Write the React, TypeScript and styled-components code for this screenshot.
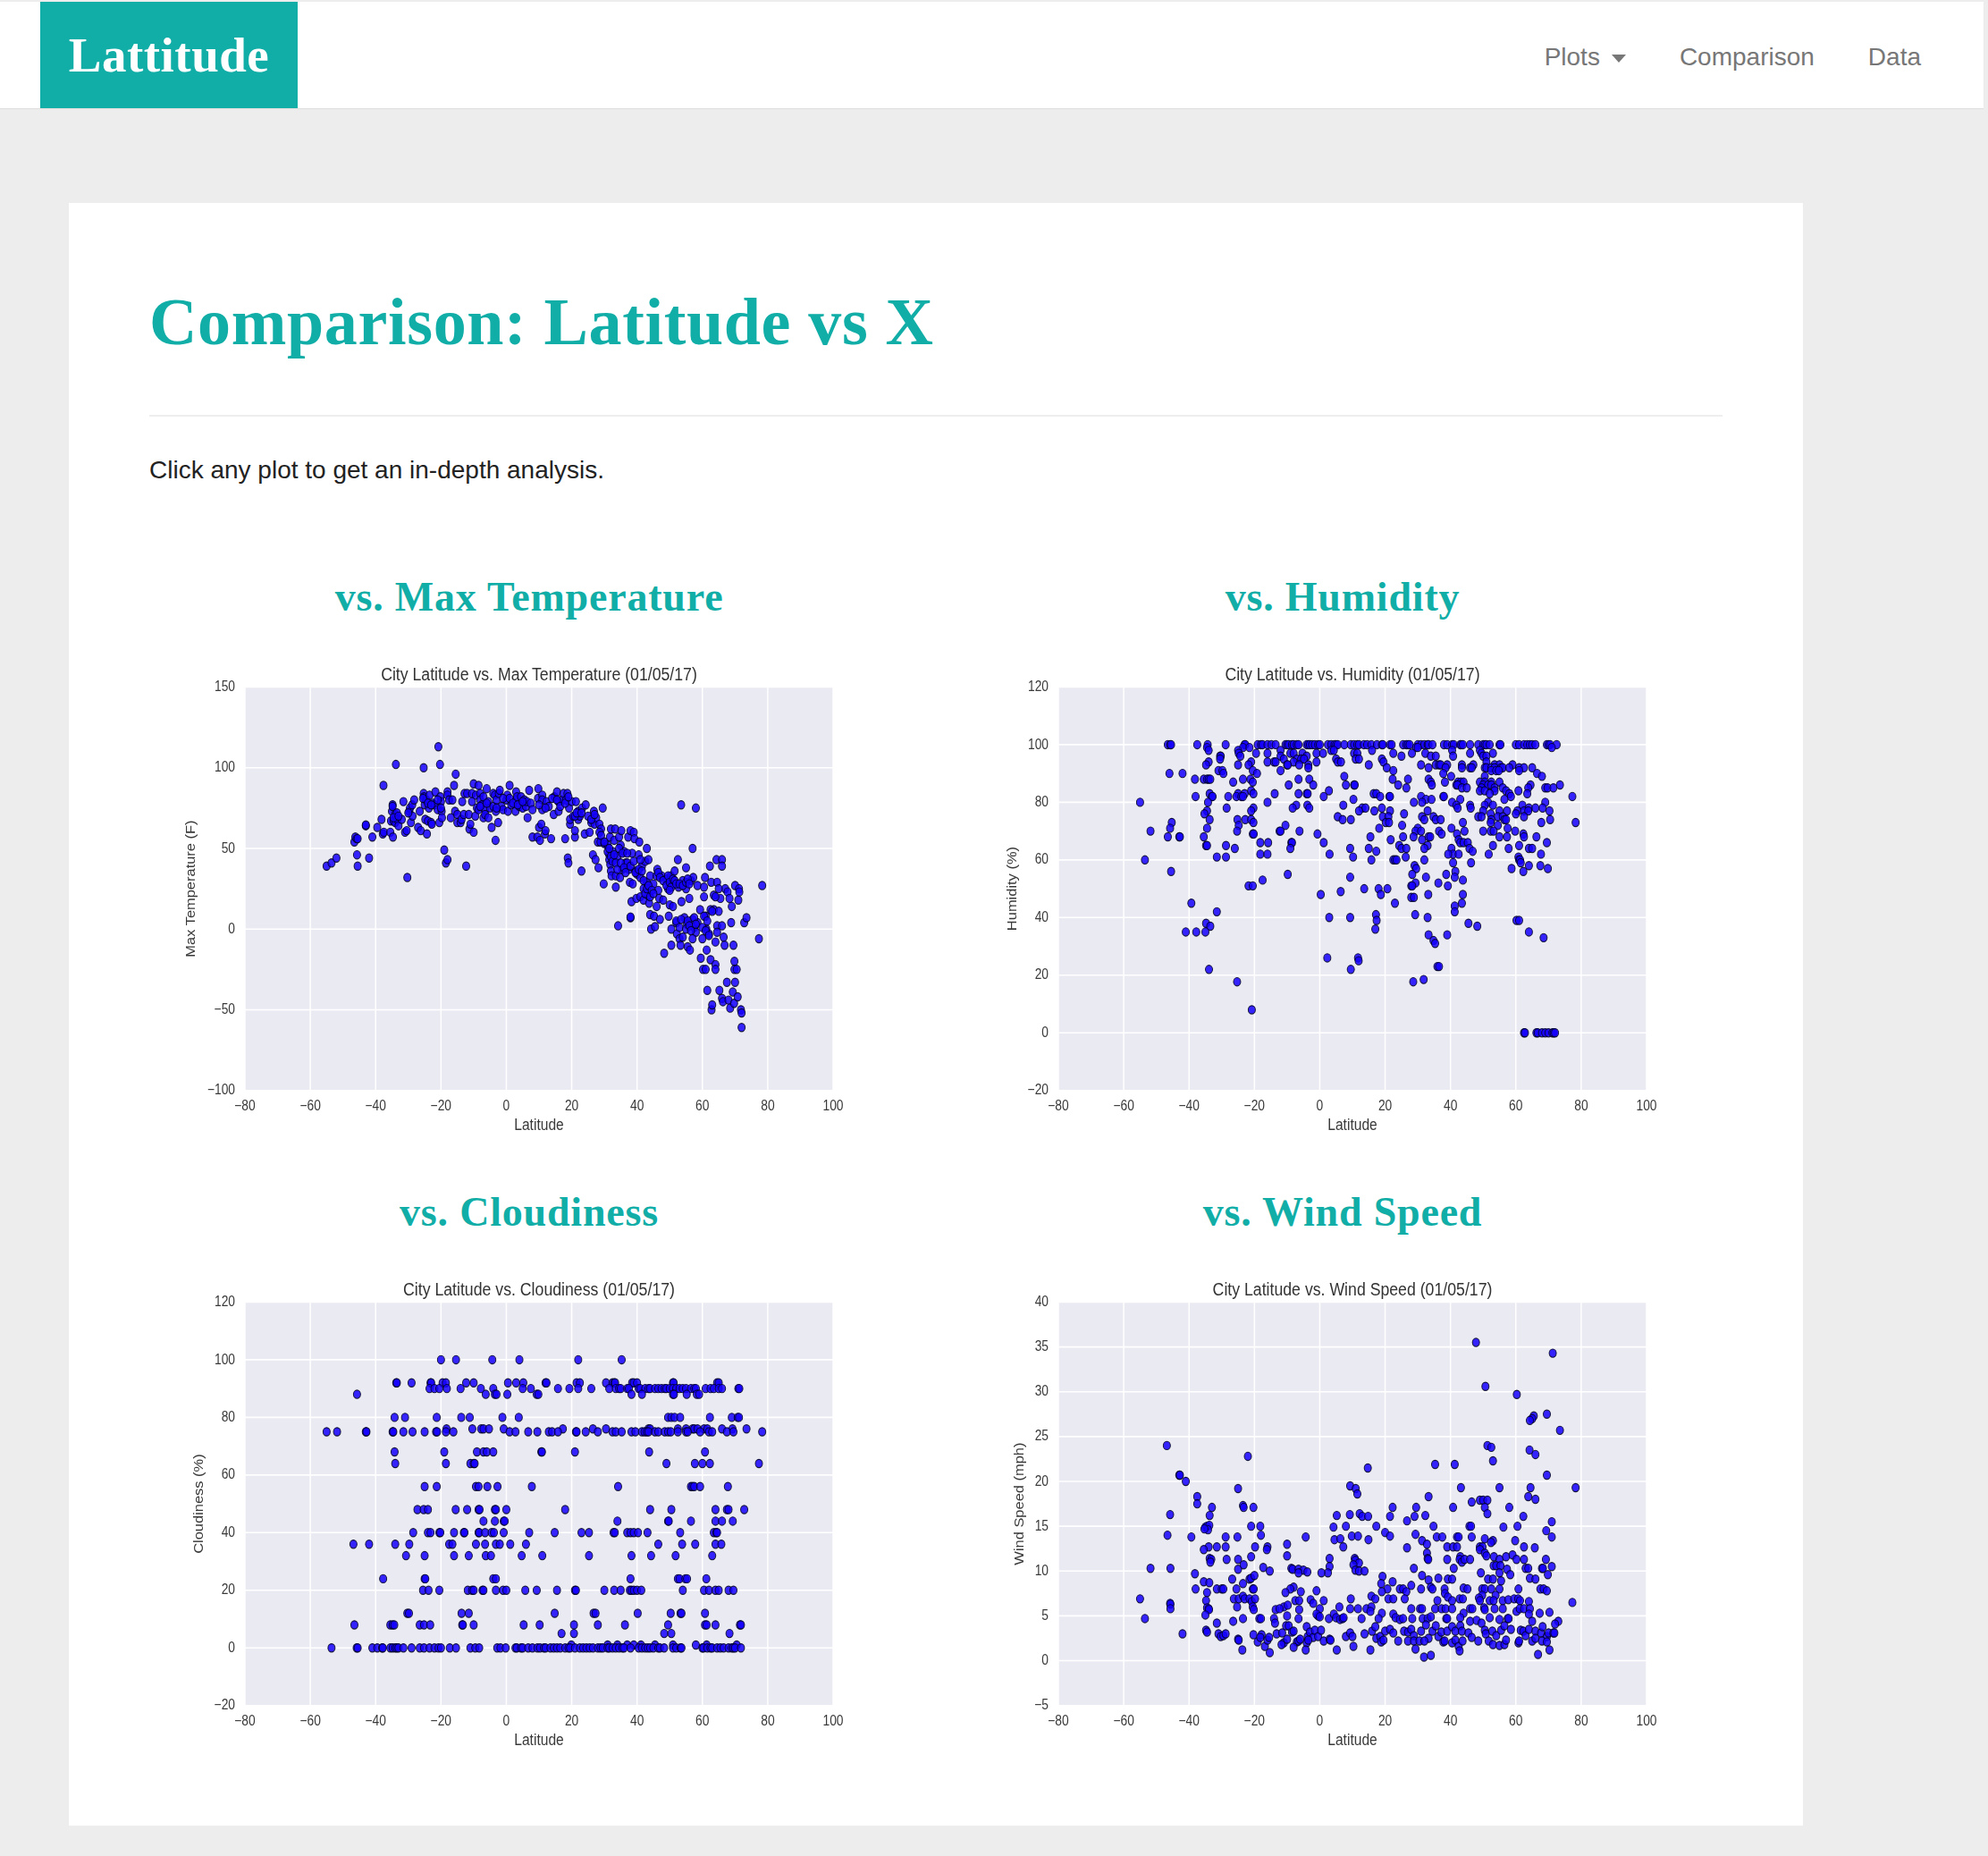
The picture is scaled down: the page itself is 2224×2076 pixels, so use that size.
import styled, { createGlobalStyle } from 'styled-components';

const GlobalStyle = createGlobalStyle`
    html, body {
        margin: 0;
        padding: 0;
        background: #ededed;
        font-family: "Liberation Sans", Arial, sans-serif;
    }
`;

type Row = [number, number[]];

// lat,value pairs read off the plots
const tempPoints = [
    -55,39,-53.5,41,-52,44,-46.5,54,-46.2,57,-45.8,56,-45.5,56,-45.7,46,-45.5,39,-42,44,-41,57,-43,64,-43,64.5,-39.5,63,-38.2,68,-37.8,59,-37.5,60,-37.6,89,
    -35.5,60,-35.3,67,-35,73,-34.8,77,-34.8,76,-34.7,57,-34.5,67,-34,71,-34,66,-33.8,102,-33.5,72,-33.3,68,-33,64,-32,68,-31.5,79,-31,60,-30.5,61,-30.3,32,
    -29.7,73,-29.5,75,-29.2,66,-28.8,77,-28.7,70,-28.2,80,-27,63,-26.5,73,-26.2,61,-25.3,100,-25.3,84,-25.2,82,-25,77,-24.8,68,-24.5,80,-24.3,59,-24,67,-23.7,75,-23.5,83,
    -23,66,-22.8,65,-22.5,78,-22,77,-21.7,85,-21,74,-20.8,113,-20.5,66,-20.3,102,-20.2,82,-20,79,-19.8,73,-19.7,69,-19,49,-18.5,41,-18,43,-18,85,-18,83,-17.5,80,-17,69,
    -16.5,80,-16,89,-15.7,73,-15.5,96,-15,71,-15,66,-14,66,-13.7,68,-13.5,79,-13,71,-12.8,84,-12.3,39,-12,84,-11.5,71,-11.3,62,-11,65,-10.5,84,-10.5,79,-10,60,-10,90,
    -9.5,70,-9.3,83,-9,75,-8.5,74,-8.5,89,-8,84,-8,80,-7.5,77,-7,69,-7,82,-6.5,74,-6.5,71,-6,87,-5.5,79,-5.5,69,-5,75,-4.5,63,-4,84,-4,76,-3.5,83,-3.3,55,-3.2,73,-3,80,
    -2.5,66,-2.3,84,-2,86,-1.5,76,-1,74,0,80,0.3,83,0.5,73,1,89,1.5,77,2.8,73,3,85,3,80,3.3,82,4,76,4.5,82,5,75,5.5,80,6,76,6.3,79,6.5,69,7,86,7.5,78,8,74,8,57,9.5,57,
    9.7,81,9.8,87,10,63,10.3,55,10.7,65,11,83,11,80,11,74,11.8,59,12,61,12.3,79,13,76,13.7,56,14.5,71,14.7,82,15.5,85,16,73,16,79,17,80,17.5,84,18,56,18.3,80,18.7,84,
    18.8,44,19,41,19.2,75,19.5,65,19.5,68,20,79,20.5,70,21,57,21,61,21.3,79,22,68,22,73,22.5,70,23,36,23.2,75,24,59,24.3,77,25,70,25.5,60,26,66,26.5,46,26.8,73,27,65,
    27.3,43,27.5,69,28,54,28.2,38,28.5,65,28.8,54,29,62,29.5,75,29.8,28,30,53,31,52,31.5,46,31.7,57,32,62,31.5,43,31.8,40,32,36,32.2,33,32.5,48,33,55,33.3,62,33.5,26,
    33.5,33,34,45,34.2,2,34.5,57,34.8,32,35,52,35.2,61,35.5,37,36,48,36.5,41,37,41,37.3,57,37.5,37,37.8,29,38,61,38,7,38,7.5,38.3,17,38.5,47,38.7,28,39,60,39.2,56,39.5,36,
    39.8,19,40,34,40.5,46,40.7,54,41,32,41,20,41.5,39,42,18,42,25,42.5,42,43,50,43,29,43.3,21,43.5,43,43.7,16,44,9,44,33,44.3,0,45,28,45.2,8,45.5,1.5,46,14,46.2,37,46.5,24,
    46.8,19,47,6,47.5,33,48,18,48.3,-15,49,31,49.5,25,49.7,8,50,15,50.3,33,50.5,-10,50.5,0,51,14,51,28,51.5,36,52,4,52.2,-3,52.5,43,52.7,26,53,-6,53.3,-10,53.5,77,53.6,17,
    54,30,54.5,7,55,38,55,25,55.3,3,55.5,-11,56,19,56.2,-13,56.5,30,57,6,57,50,57.2,32,57.5,1,58,75,58,-2,58.5,27,58.5,4,59.3,12,59.5,-18,60,-6,60.2,-25,60.5,20,60.5,26,
    60.8,32,61,-25,61,8,61.2,0,61.3,-13,61.5,-38,62,-3,62.3,39,62.5,-19,62.7,29,62.8,-50,63,-47,63.5,12,64,-8,64,-22,64,-25,64.3,43,64.5,29,64.5,2,65,11,65.2,-38,65.5,19,
    66,43,66,39,66,-43,66.3,-45,66.5,-5,66.8,-10,67,25,67.5,-33,67.7,23,68,-44,68.3,19,68.5,-49,68.8,4,69,14,69.3,-39,69.5,-10,69.7,-46,69.8,-20,69.8,-25,70,-33,70,27,
    70.5,-25,70.8,-42,71,18,71.2,25,71.3,23,71.8,-50,72,-52,72,-61,72.8,4,73.5,7,77.3,-6,78.3,27,
    // denser part of the curve
    -34.5,69,-33,70,-30,72,-25.5,81,-24,78,-23,77,-21,80,-20,75,-8,76,-6,78,-3,75,-1,81,1,81,2,78,3.5,77,5,79,10,77,12,75,14,81,15.5,80,16.5,76,18,78,19,82,21,70,21.5,72,
    23,72,26,68,27,71,28.5,60,29,58,30,54,31,48,31.5,50,32,45,32.5,42,33,46,33.5,41,34,37,34.5,50,35,41,35.5,47,36,38,36.5,35,37,47,38,39,39,42,39.5,35,40.5,37,41,43,
    41.5,36,42,30,42.5,22,43,25,43.5,27,44,20,44.5,24,45,22,46,33,46.5,35,47,32,48,30,49,27,49.5,33,50,29,50.5,26,51,31,51.5,30,52,28,53,28,54,27,55,29,55.5,31,56,28,
    50,24,52,5,53,1,53.5,6,54,-5,55,0,55.5,5,56,2,56.5,-1,57,-6,57.5,7,58,3,60,1,60.5,8,61,-1,61.5,5,62,-4,62.5,12,63,11,63.5,21,64,20,64.5,-2,65,25,66,2,
];

const humidityRows: Row[] = [
    [100, [-46.5,-45.8,-45.5,-37.5,-34.3,-28.8,-23,-22.8,-19,-18,-17.5,-16,-14.8,-13.5,-10.5,-10,-9.5,-8.5,-8,-7,-6.5,-4,-3.5,-3,-2.3,-1.5,-0.5,0,2.5,3.5,4.5,5,5.5,7.5,9.5,10.5,11.5,12,13.5,14.5,15.8,17.5,19,19.3,21.5,22,25.5,26.5,27,27.5,30,31,32,33,33.3,34.5,38,39,40.5,41,43,43.3,43.8,46,48.5,50,50.5,51,52,55,55.3,60,61,62.5,63.5,64.3,65,66,69.5,70,70.5,72.5]],
    [99, [-34.5,-23.5,-21.5,29.5,30,71]],
    [98, [-34,-25,-12,3.5,4.3,16,40.5,49]],
    [97, [-24.8,-19.5,-16,-9,-8,-5.3,-1,1,10.5,11.5,22.5,28.2,32.3,46,49.5,53]],
    [96, [-30.5,-30.3,-24.3,-12,-4,25,34,35.5,40.8,50,51]],
    [95, [-30.5,-11,-7,-5.7,-4.8,5,11,12,19]],
    [94, [-34,-21,-16,-14,-13.5,-8,-1,5.5,6.5,19.5,51]],
    [93, [-34.8,-25,-21.8,-10,-9.8,-6.3,-3.5,15,31,35.5,36.5,37,39,43.5,47,53.5,55,59]],
    [92, [-3.5,20.5,33.3,38.5,43.5,46,46.5,50.5,51,52.5,53.5,55.5,56,58,61,62.5,65]],
    [91, [-31,-29.8,-20.5,-12,22.5,52.5,54,54.8,61]],
    [90, [-46,-42,-29.5,-19.2,37.8,66.5]],
    [89, [7.5,40.2,50.5,68]],
    [88, [-38.2,-35.5,-34.5,-34,-33.5,-23.5,-21.2,-6.5,-3.2,22.3,27,33.3]],
    [87, [-26.5,-20.5,34,38.3,42.3,43.2,44,49,50.5,52.5,55]],
    [86, [-9.5,-2,8,10.5,10.7,24,34.3,41.8,42.2,50,51.5,52.5,64.5,73.5]],
    [85, [26.5,43.5,45,49.5,53.5,56,63.8,69,69.7,71.5]],
    [84, [-21,2.8,49,50.5,53.5,57,60.8]],
    [83, [-33.7,-25,-23,-20.3,-13.8,-6.5,-4,-3.7,16.5,17.3,52,58,63.5]],
    [82, [-38,-33,-32.8,-28,-25.5,-24,-23.5,1.2,18.5,21.3,21.5,31,37.8,38,58.5,77.3]],
    [81, [10.3,32.5,34.2,43,56.5]],
    [80, [-55,-34.2,-16,28.8,31.3,40.5,51.5,69]],
    [79, [-7.2,-3.8,7.2,41.8,46,50.5,53,62]],
    [78, [-28.5,-20.3,-8.3,-3.2,13,14,19,42.2,46.2,64,66,68.2]],
    [77, [-34.5,-21,12,16.7,21.5,33,50,55,57.3,60.5,62.5,63.8,70.3]],
    [76, [-35.3,25.8,52.3,60]],
    [75, [5.5,19.3,21,31.3,34.8,48.5,49.5,54.5,56,62.5]],
    [74, [-33.7,-25.2,-22.8,-21,7,9.5,32,35.5,37,52.5,56.5,57,70.5]],
    [73, [-45.3,-20.3,20.2,21.2,43.8,52.3,67.8,78.3]],
    [72, [-24.8,-10.5,25.2,54.5]],
    [71, [-45.8,-34.5,18.2,30,40.3,57.5]],
    [70, [-51.8,-25.3,-12.3,-12,-6.2,29.3,31,36.5,44.3,50,52.3,53.2,59.8]],
    [69, [-20.5,-20.2,-0.7,37.3,42,62.3]],
    [68, [-46.5,-43,-42.8,-35.5,15.5,25.5,28.7,33.3,33.8,55,57.3,62.5,66.3]],
    [67, [21.7,31.3,42.5]],
    [66, [-18.2,-15.8,-8.7,-8.5,1.2,43,44,45.3,69.5]],
    [65, [-34.8,-34.5,-28.7,24.3,33,53,61]],
    [64, [-26,-9,9.3,15,25,26.5,32,40.3,45.8,57.8,64,65]],
    [63, [17.3,46.8]],
    [62, [-18.2,-16,3,40.8,39.3,42.5,51.7,67.7]],
    [61, [-31.5,-28.7,10.2,26.3,60.8]],
    [60, [-53.5,15.8,22.5,23,23.5,32,61,61.3]],
    [59, [40.8,46.3,61.5]],
    [58, [29,64,67.5]],
    [57, [29.5,58.7,69.8]],
    [56, [-45.5,41.5,62.3]],
    [55, [-9.8,28.3,38.7]],
    [54, [9.3,32.5,41.3]],
    [53, [-17.5,43.8]],
    [52, [29.3,36.3]],
    [51, [-21.8,-20.5,28,28.3,39.2]],
    [50, [13.6,18,20.7]],
    [49, [6.4]],
    [48, [0.3,18.7,33.2,43.8]],
    [47, [28,28.8]],
    [45, [-39.3,23,43.5]],
    [44, [41.3]],
    [42, [-31.5,41.3]],
    [41, [17.2,29.2]],
    [40, [2.9,9.3,33]],
    [39, [17.4,60.2,61]],
    [38, [-34.8,45.5]],
    [37, [-33.5,48.2]],
    [36, [17]],
    [35, [-41,-37.8,-35,64]],
    [34, [33.3,39]],
    [33, [68.5]],
    [32, [34.8]],
    [31, [35.3]],
    [26, [2.3,11.7]],
    [25, [11.9]],
    [23, [36,36.5]],
    [22, [-33.9,9.5]],
    [18.5, [31.8]],
    [17.7, [-25.3,28.6]],
    [8, [-20.8]],
    [0, [62.5,62.8,66.3,66.7,68,69,70,71.2,71.6,72]],
];

const cloudRows: Row[] = [
    [100, [-20,-15.4,-4.3,4,22,35.3]],
    [92, [-33.7,-33.5,-29,-23.2,-23,-19.5,-18.5,-12.3,-10,0.5,3,5.2,12,12.3,21.5,22.5,30.5,32.5,33,33.3,38.5,39,40,51,51.2,64.5,65]],
    [90, [-23.5,-22,-20.5,-18.2,-14,-7.8,-4,5,7.5,15.8,19.3,22,26,31.5,33.5,34.5,35,37,37.5,40.5,41,42.5,43.5,44,45.5,46.5,47.5,48.5,49,50,51,52,53,54,55,56.5,57.5,58,61,62.5,63.5,65,66,71,71.3]],
    [88, [-45.7,-6.3,-3.5,-3,0.3,9.3,9.8,38.3,41.5,51,51.3,55.2,58.3,59]],
    [80, [-34.2,-31,-21.3,-13.8,-11.2,-1.2,3.8,49.5,50.5,51.5,53.2,62.3,69,70.8,71.2]],
    [76, [-18.3,-10.4,-7.7,-7,-5.3,-0.8,17.3,26.5,30.5,43.5,44,52.5,55,57,57.5,58.5,60.5,61.5,66,69.2,73.5]],
    [75, [-55,-51.8,-43,-42.8,-34.8,-34.6,-31.5,-28.7,-25,-21.5,-21.2,-18.5,-16.2,1,2.8,6.7,9.5,13,14,15.8,21.3,21.5,24.3,28,32.5,33.5,35.3,38.3,39.5,41.5,42.3,43,43.5,45.5,46.5,48.5,49.5,50.3,52.5,55,55.5,59.3,62,63,67.5,69.5,78.3]],
    [68, [-34.2,-19,-9,-7,-6,-4,10.7,10.9,21,43.7,60.8]],
    [64, [-34,-18.5,-11,-10,-9.7,49,57.7,60,62.3,77.3]],
    [56, [-25,-21.3,-9.3,-8.5,-5.8,-2.7,7.8,34.2,56.5,57,57.5,59.3,67.8]],
    [48, [-27.2,-25.3,-24,-15.5,-12,-8.5,-8.2,-3.5,-3.2,0,18,44,50.5,64,67.5,68,72.8]],
    [44, [-7,-3.5,-0.8,-0.5,34,49.5,49.7,56.5,64,66,69.3]],
    [40, [-28.5,-24,-23.2,-20.5,-20.2,-16,-13,-12.8,-8.5,-8.3,-6.5,-4.5,-3.8,-0.8,7,14.8,23,25.3,32.8,33.2,37,38,39,40.3,43.2,53.2,63.5,64.2,64.5]],
    [36, [-46.8,-42,-34,-29.7,-17.5,-16.5,-9.3,-6.5,-3.2,-2,1.2,6,46.5,53.8,57.8,64,65.8]],
    [32, [-30.7,-25,-16,-11.5,-6.3,-4.7,4.7,11,25.3,38.3,44.3,51.8,63]],
    [24, [-37.7,-25,-24.8,-4,-3.2,38,52.5,53,54.8,55.3,61.2]],
    [20, [-25.5,-23.8,-20.5,-11.8,-10.5,-10,-7.3,-7,-3.2,-1,0,5.8,9.3,15.5,21,21.3,30,33,35,37.8,38.3,39,40,41.3,54,60.5,62,64,65,68,69.5]],
    [12, [-30.3,-29.8,-13.7,-11.5,14.8,26.7,27.3,40.2,50.3,53.3,53.6,60.8]],
    [8, [-46.5,-35.5,-34.8,-34.3,-26.5,-25.2,-23.3,-13.5,-13.3,-10,5.3,10.2,20.7,28,36.3,49.5,60.8,61.3,64,71.5,71.8]],
    [5, [16.9,20.7,48.3,50.5,68.3]],
    [1, [19.9,31,34,37,39,41.2,45.5,51,58,61.3,70.5]],
    [0, [-53.5,-45.8,-45.5,-41,-39.5,-38,-37.8,-35.5,-34.8,-34,-33.5,-33,-31.5,-29,-26.5,-25.2,-23.5,-22,-20.8,-20,-17.3,-15.4,-11,-9.5,-8.3,-2.8,-1.8,-0.2,2.8,3.2,4.5,5,6.7,8,9.5,10.3,11.5,12,13.5,14.5,15.5,16.5,18,19,19.5,21,22.5,23.5,24.5,25.5,26.5,28,28.8,29.5,31,31.5,32.5,33.5,34.5,35.5,36,38,40.5,41.5,42.5,43.3,44,45,46.5,47,48.3,51,52,53.3,53.6,60,60.3,61.5,62.5,63,64.5,65.5,66.5,68,69,69.5,70,71.8]],
];

const windPoints = [
    47.8,35.5,71.3,34.3,50.7,30.6,60.3,29.7,69.5,27.5,65.5,27.3,65,27,64.3,26.8,73.5,25.7,-46.8,24,51.3,24,52.5,23.8,64.2,23.5,66,23,-22,22.8,53,22.3,35.3,21.9,41.3,21.9,14.7,21.5,
    69.5,20.7,-43,20.7,-42.8,20.7,-41,20,9.3,19.5,11,19.2,43.2,19.3,55,19.3,64.5,19.3,78.3,19.3,-25,19.2,-37.5,18.3,11.5,18.6,33.3,18.3,63.8,18.3,66,18,49,17.9,50,17.9,51.3,17.9,46.5,17.7,
    -37.5,17.5,-23.5,17.3,-23.3,17.1,-33,17.1,-20.3,17.1,22.3,17.1,29.5,17.1,40.8,17.1,50.5,17.1,58,17.1,-45.8,16.3,-33.7,16.2,5.2,16.2,9.2,16.3,12.2,16.4,13,16.1,14.8,16.1,21.5,16.1,29,16.1,32.3,16.2,51.3,16.4,62.3,16.1,
    26.7,15.6,71,15.5,-35,14.9,-34.5,15,-33.8,15.1,-21,15,-18.2,15,4.2,14.9,8,15,17.3,15,34.8,15,45.8,15,46.3,15,56.2,14.9,60.5,15,-34.2,14.6,-35.3,14.7,69.3,14.5,
    -46.6,14,-39.3,13.8,-28.8,13.8,-25.2,13.8,-18,14,-4.3,13.8,9.8,13.9,11.7,13.9,20,14.3,21.5,13.9,29.3,14.1,35.8,13.8,37.5,13.8,42,13.8,42.5,13.8,46.5,13.8,50.5,13.6,71,13.8,4.5,13.5,6.3,13.6,14.9,13.5,31.3,13.4,32.8,13,53,13.4,52.4,13.2,59.8,13.4,
    -34,12.7,-31.5,12.7,-28.8,12.7,-19.8,12.7,-16,12.7,-16.2,12.4,-35.5,12.4,-10,13,7.2,12.7,26.7,12.6,39,12.7,40.8,12.7,42,12.7,49,12.7,49.8,12.7,49,12.4,62.5,12.7,65.8,12.6,
    -33.7,11.4,-33.2,11.3,-33.5,11,-28.5,11.3,-25,11.3,-21,11.6,-10,11.7,3,11.4,10.7,11.4,10.9,11.2,12,10.9,32.8,12,33,11.4,33.2,11.3,39,11.3,43,11.6,42.8,11.3,43.5,11,44.3,11.3,46,11.3,50.5,12,51,11.7,53.3,11.6,55,11.3,57,11.6,59,11.8,60.2,11.3,62.5,11.3,69.2,11.3,
    -45.7,10.3,-51.8,10.3,-25,10.2,-23.3,10.7,-17.3,10.4,-15.3,10,-8.7,10.3,-8.3,10.2,-6.5,10.2,-5,10.1,-3.8,9.9,-6.5,9.8,3,10.5,2.5,9.8,0.5,9.8,10.3,10.7,10.9,10.1,12,10,13.7,10,28.8,10.3,41,10.3,53.2,10.6,54,10.6,55.3,10.6,57.3,10.2,63,10.3,63.8,10.3,68,10.3,68.3,10.3,71,10.5,
    -38.2,9.7,-35.5,8.8,-33.8,8.7,-26.8,9.1,-21.5,9.1,-21,9.2,-20,9.5,-23.5,8.6,19.2,9.4,22.3,8.8,31.3,9.5,33.3,9,36.3,9.2,39.2,9.1,40.5,9.1,49.3,9.8,51.5,9.1,53,9.1,55,9.8,55.5,8.9,58.3,9.6,64.3,9.2,66,9.1,69.8,9.6,18.8,8.6,28,8.4,
    -38,8,-31.5,8,-30,8,-29.5,8,-25.5,8,-20.5,8,-20.2,8,-8,8.2,-9,8,-5.8,7.7,-1,7.8,20.7,8,24.5,8,25.5,8,31,8,34,8.2,34.5,8,38.2,8,44,8.1,45.2,8,49.7,8,50.5,8,52.5,8,55,8,60.8,8,67.5,8,68.5,8,69.5,7.8,
    -34.5,7.6,-10.5,7.6,15.8,7.2,19,7.7,26.5,7.7,38.3,7.5,49.7,7.3,53.8,7.3,
    -55,6.9,-34.8,6.7,-26.3,6.9,-24.8,6.9,-23.5,7.2,-23,6.9,-21.5,6.9,-20.8,6.6,-19.8,6.9,-7.5,6.7,-6.3,6.7,-2.8,6.8,1.2,6.7,9.5,6.9,17,6.9,21,6.9,22.5,6.9,26,6.9,36,6.7,39.2,7.1,40.5,6.7,42.8,6.9,43.8,6.9,48.7,7,49,6.7,52,6.7,53.2,6.7,56,6.7,57.7,6.8,59.5,6.9,60.7,6.9,61.3,6.7,64,6.6,77.3,6.5,
    -45.8,6.4,-45.7,6.3,-45.7,5.8,-25.3,6,-20.5,6,-20.2,5.7,-34.5,5.9,-34,5.8,-33.9,5.7,-11,6,-9.8,6.2,-13.5,5.7,-12.3,5.8,-6.3,5.7,-2,6.4,-0.5,5,0,5.8,6,6,9.3,5.8,11.7,5.8,14.3,5.8,15.8,6,28,5.8,30.7,5.8,31.3,5.8,35.3,5.8,37.3,5.8,38.5,5.8,40.5,5.8,46,5.8,46.7,5.8,50.3,5.9,50.5,5.7,53.5,5.8,56,5.8,60.2,5.5,61.2,5.8,62.5,5.8,64.3,5.8,
    -53.5,4.7,-35,5.1,-23.5,4.7,-14,4.7,-18.5,4.7,-18,4.7,-10,5,-6.5,4.7,-1,5.2,0,4.9,2.8,4.7,4.3,5.2,5,4.8,6.2,4.6,7,4.7,7.3,4.8,12.8,4.7,15.5,5.5,19,5.3,18,4.7,22.5,5.2,23.2,4.8,24.5,4.6,25.5,4.7,28.3,4.7,31.5,4.7,33,4.7,34,4.9,38.7,4.7,39,4.7,44,5.3,43,4.8,46,4.4,48,4.5,49.5,4.2,52,4.8,55,4.6,57.5,4.7,57.8,4.7,64,5.2,67.3,5.3,70.3,5.4,65,4.4,73,4.4,72,4.1,
    -42,3,-34.8,3.4,-34.5,3.2,-31.5,4.2,-31,3,-30.3,2.7,-29.5,2.8,-28.8,3,-26.5,4.4,-20.3,2.9,-17.8,2.9,-13.7,4.2,-13.2,3,-11.5,3.1,-11,2,-10.3,3.9,-9.5,3.9,-8.5,3.2,-8,3.3,-4,3.8,-3.7,2.7,-3,3.2,-2,2.6,-1.5,3.4,-0.5,2.7,0.4,3.4,8,2.7,9.3,3.1,10,2.7,13.7,3,16,3.3,17,3.8,17.3,2.5,18.5,2.7,20,3.3,21.5,3.5,22.5,3.1,25.8,3.3,27,3.2,28,3.5,28.8,2.8,31,3.3,32.5,4,33.3,2.5,34.5,3.3,35.5,3.9,36.3,2.7,37.2,3.2,39,3.3,40.5,3.8,41.5,3.3,43,3.9,43.5,3.3,45.5,3.1,46.5,2.6,50.5,3.4,50.8,3,52.8,3.3,54,2.8,55.5,3.4,56.5,3.9,58.5,3.5,61.5,3.4,62.3,3.3,63,2.8,64,3.5,66,3.3,67.7,3.1,68.2,3.8,69.5,2.7,70,3.1,71.5,3.1,71.8,3.1,
    -25,2.4,-24.8,2.3,-19,2.1,-18.2,2.6,-16.8,1.6,-16,2.3,-15.5,2.6,-11.7,1.8,-10,2.4,-7,2.1,-6.5,2.2,-6,2.4,-4,2,-3.5,2.3,1.2,2.2,3,2.4,3.3,2.3,18.8,2.1,19.5,2.3,24,2.2,27,2.2,28.8,2.2,30.5,2.2,32,2.2,37.8,2.1,38.2,2.2,40.5,2,41.5,2.3,42.5,1.6,43.7,2.2,48.5,2.2,51.7,2.2,53,1.8,55,1.7,56.5,1.8,57,2.3,60.8,2,61,2.2,65,2.2,66,2.5,68,2.2,69.5,2.1,
    -23.7,1.2,-15.3,0.9,-8,1.5,-4.3,1.2,5.2,1.2,10.3,1.6,15.5,1.2,29.3,1.3,42.8,1.1,70.3,1.2,31.9,0.4,34,0.6,66.8,0.7,
];

const pairsFrom = (flat: number[]) => {
    const pts: [number, number][] = [];
    for (let i = 0; i < flat.length; i += 2) pts.push([flat[i], flat[i + 1]]);
    return pts;
};
const pairsFromRows = (rows: Row[]) =>
    rows.flatMap(([val, lats]) => lats.map((lat) => [lat, val] as [number, number]));

interface PlotData {
    heading: string;
    title: string;
    yLabel: string;
    yMin: number;
    yMax: number;
    yStep: number;
    labelX: number;
    points: [number, number][];
}

const plots: PlotData[] = [
    { heading: 'vs. Max Temperature', title: 'City Latitude vs. Max Temperature (01/05/17)', yLabel: 'Max Temperature (F)', yMin: -100, yMax: 150, yStep: 50, labelX: 16, points: pairsFrom(tempPoints) },
    { heading: 'vs. Humidity', title: 'City Latitude vs. Humidity (01/05/17)', yLabel: 'Humidity (%)', yMin: -20, yMax: 120, yStep: 20, labelX: 25, points: pairsFromRows(humidityRows) },
    { heading: 'vs. Cloudiness', title: 'City Latitude vs. Cloudiness (01/05/17)', yLabel: 'Cloudiness (%)', yMin: -20, yMax: 120, yStep: 20, labelX: 25, points: pairsFromRows(cloudRows) },
    { heading: 'vs. Wind Speed', title: 'City Latitude vs. Wind Speed (01/05/17)', yLabel: 'Wind Speed (mph)', yMin: -5, yMax: 40, yStep: 5, labelX: 33, points: pairsFrom(windPoints) },
];

// The figures are stretched vertically like the scaled images they stand for
const VIEW_W = 780;
const VIEW_H = 483;
const LEFT = 72;
const RIGHT = 730;
const TOP = 32.3;
const BOTTOM = 421.5;
const xTicks = [-80, -60, -40, -20, 0, 20, 40, 60, 80, 100];

const fmt = (n: number) => (n < 0 ? `\u2212${-n}` : `${n}`);

function ScatterPlot({ title, yLabel, yMin, yMax, yStep, labelX, points }: PlotData) {
    const sx = (lat: number) => LEFT + ((lat + 80) / 180) * (RIGHT - LEFT);
    const sy = (v: number) => BOTTOM - ((v - yMin) / (yMax - yMin)) * (BOTTOM - TOP);
    const yTicks: number[] = [];
    for (let v = yMin; v <= yMax; v += yStep) yTicks.push(v);
    const midY = (TOP + BOTTOM) / 2;

    return (
        <Figure viewBox={`0 0 ${VIEW_W} ${VIEW_H}`} preserveAspectRatio="none">
            <rect x={LEFT} y={TOP} width={RIGHT - LEFT} height={BOTTOM - TOP} fill="#eaeaf2" />
            {xTicks.map((t) => (
                <line key={t} x1={sx(t)} x2={sx(t)} y1={TOP} y2={BOTTOM} stroke="#fff" strokeWidth="1.5" />
            ))}
            {yTicks.map((t) => (
                <line key={t} x1={LEFT} x2={RIGHT} y1={sy(t)} y2={sy(t)} stroke="#fff" strokeWidth="1.4" />
            ))}
            {points.map(([lat, v], i) => (
                <Dot key={i} cx={sx(lat)} cy={sy(v)} r="4" />
            ))}
            <PlotTitle x={(LEFT + RIGHT) / 2} y="26">{title}</PlotTitle>
            {xTicks.map((t) => (
                <TickLabel key={t} x={sx(t)} y="441" textAnchor="middle">{fmt(t)}</TickLabel>
            ))}
            {yTicks.map((t) => (
                <TickLabel key={t} x="61" y={sy(t) + 4} textAnchor="end">{fmt(t)}</TickLabel>
            ))}
            <AxisLabel x={(LEFT + RIGHT) / 2} y="460">Latitude</AxisLabel>
            <YLabel transform={`translate(${labelX} ${midY}) rotate(-90)`}>{yLabel}</YLabel>
        </Figure>
    );
}

export default function App() {
    return (
        <Page>
            <GlobalStyle />
            <Navbar>
                <Brand>Lattitude</Brand>
                <NavLinks>
                    <NavLink>Plots<Caret /></NavLink>
                    <NavLink>Comparison</NavLink>
                    <NavLink>Data</NavLink>
                </NavLinks>
            </Navbar>
            <Card>
                <Title>Comparison: Latitude vs X</Title>
                <Divider />
                <Intro>Click any plot to get an in-depth analysis.</Intro>
                <PlotGrid>
                    {plots.map((p) => (
                        <PlotCell key={p.heading}>
                            <PlotHeading>{p.heading}</PlotHeading>
                            <ScatterPlot {...p} />
                        </PlotCell>
                    ))}
                </PlotGrid>
            </Card>
        </Page>
    );
}

const teal = '#11ada7';

const Page = styled.div`
    width: 2224px;
    height: 2076px;
    padding: 2px 5px 34px 0;
    box-sizing: border-box;
    overflow: hidden;
`;

const Navbar = styled.nav`
    height: 119px;
    background: #fff;
    padding: 0 70px 0 45px;
    display: flex;
    justify-content: space-between;
    align-items: stretch;
    box-shadow: 0 1px 1px rgba(0, 0, 0, 0.06);
`;

const Brand = styled.a`
    width: 288px;
    background: ${teal};
    color: #fff;
    font-family: "Liberation Serif", Georgia, serif;
    font-weight: 700;
    font-size: 55px;
    letter-spacing: 0.5px;
    display: flex;
    align-items: center;
    justify-content: center;
`;

const NavLinks = styled.div`
    display: flex;
    align-items: center;
    gap: 60px;
    padding-top: 4px;
`;

const NavLink = styled.a`
    color: #777;
    font-size: 28px;
    display: flex;
    align-items: center;
`;

const Caret = styled.span`
    width: 0;
    height: 0;
    margin: 3px 0 0 13px;
    border-left: 8px solid transparent;
    border-right: 8px solid transparent;
    border-top: 9px solid #777;
`;

const Card = styled.main`
    width: 1940px;
    height: 1815px;
    margin: 106px 0 0 77px;
    padding: 90px 90px 0;
    box-sizing: border-box;
    background: #fff;
`;

const Title = styled.h1`
    margin: 0;
    height: 147px;
    color: ${teal};
    font-family: "Liberation Serif", Georgia, serif;
    font-weight: 700;
    font-size: 74px;
    line-height: 86px;
    letter-spacing: 0.65px;
`;

const Divider = styled.hr`
    margin: 0;
    border: none;
    border-top: 2px solid #eee;
`;

const Intro = styled.p`
    margin: 44px 0 0;
    color: #222;
    font-size: 28px;
    line-height: 32px;
`;

const PlotGrid = styled.div`
    display: grid;
    grid-template-columns: 910px 910px;
    margin: 96px -30px 0;
`;

const PlotCell = styled.section`
    height: 688px;
`;

const PlotHeading = styled.h2`
    margin: 0;
    height: 93px;
    text-align: center;
    color: ${teal};
    font-family: "Liberation Serif", Georgia, serif;
    font-weight: 700;
    font-size: 46px;
    line-height: 60px;
    letter-spacing: 0.8px;
`;

const Figure = styled.svg`
    display: block;
    width: 780px;
    height: 560px;
    margin: 0 auto;
    filter: blur(0.4px);
`;

const Dot = styled.circle`
    fill: rgba(20, 0, 255, 0.85);
    stroke: rgba(0, 0, 30, 0.85);
    stroke-width: 1;
`;

const PlotTitle = styled.text`
    fill: #333;
    font-size: 17.7px;
    text-anchor: middle;
`;

const TickLabel = styled.text`
    fill: #3a3a3a;
    font-size: 13.8px;
`;

const AxisLabel = styled.text`
    fill: #3a3a3a;
    font-size: 15.6px;
    text-anchor: middle;
`;

const YLabel = styled(AxisLabel)`
    font-size: 14.2px;
`;
